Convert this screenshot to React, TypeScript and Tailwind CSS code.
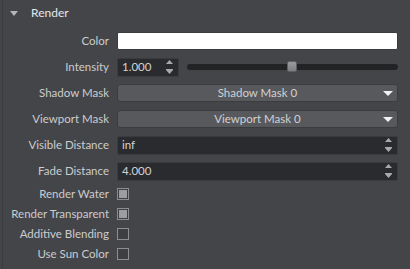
import React from "react";

const font = { fontFamily: "Lato, 'Liberation Sans', sans-serif" };

function Label({ children }: { children: React.ReactNode }) {
  return (
    <div className="w-[110px] shrink-0 pr-[1px] text-right text-[11.5px] leading-none text-[#cbccce]">
      {children}
    </div>
  );
}

function Spinner() {
  return (
    <div className="flex flex-col items-center gap-[5px]">
      <svg width="7" height="4" viewBox="0 0 7 4">
        <polygon points="0,4 7,4 3.5,0" fill="#a8a9ab" />
      </svg>
      <svg width="7" height="5" viewBox="0 0 7 5">
        <rect x="0" y="0" width="7" height="1" fill="#a8a9ab" />
        <polygon points="0,1 7,1 3.5,5" fill="#a8a9ab" />
      </svg>
    </div>
  );
}

function NumInput({ value, className }: { value: string; className: string }) {
  return (
    <div
      className={`${className} flex h-[19px] items-center justify-between rounded-[2px] border border-[#3a3b3e] bg-[#2a2b2e] pl-[4px] pr-[5px] text-[11.5px] leading-none text-[#d2d3d5]`}
    >
      <span>{value}</span>
      <Spinner />
    </div>
  );
}

function Dropdown({ value }: { value: string }) {
  return (
    <div className="relative flex h-[18px] w-[281px] items-center justify-center rounded-[3px] border border-[#3b3c3f] bg-[#58595d] text-[11.5px] leading-none text-[#d0d1d3]">
      <span>{value}</span>
      <svg className="absolute right-[4px] top-[6px]" width="10" height="5" viewBox="0 0 10 5">
        <polygon points="0,0 10,0 5,5" fill="#f2f2f2" />
      </svg>
    </div>
  );
}

function Checkbox({ checked }: { checked: boolean }) {
  return (
    <div className="flex h-[12px] w-[12px] items-center justify-center border border-[#8c8d90] bg-[#3e3f42]">
      {checked && <div className="h-[8px] w-[8px] bg-[#9c9da0]" />}
    </div>
  );
}

export default function App() {
  return (
    <div className="flex h-[269px] w-[410px] bg-[#444549]" style={font}>
      <div className="w-[2px] shrink-0" />
      <div className="flex-1 border-l border-[#3a3b3e]">
        <div className="flex h-[28px] items-center pb-[2px]">
          <svg className="ml-[7px]" width="8" height="5" viewBox="0 0 8 5">
            <polygon points="0,0 8,0 4,5" fill="#b4b5b8" />
          </svg>
          <span className="ml-[13px] text-[12px] leading-none text-[#e6e7e9]">Render</span>
        </div>

        <div className="-ml-[3px] flex flex-col">
          <div className="flex h-[26px] items-center gap-[7px]">
            <Label>Color</Label>
            <div className="h-[18px] w-[281px] rounded-[2px] border border-[#3a3b3e] bg-white" />
          </div>

          <div className="flex h-[26px] items-center gap-[7px]">
            <Label>Intensity</Label>
            <NumInput value="1.000" className="w-[62px]" />
            <div className="relative ml-[1px] flex h-[12px] w-[211px] items-center">
              <div className="h-[6px] w-full rounded-[3px] bg-[#222325]" />
              <div className="absolute left-[100px] top-0 h-[11px] w-[10px] rounded-[2px] border border-[#5e5f62] bg-gradient-to-b from-[#9a9b9e] to-[#7d7e81]" />
            </div>
          </div>

          <div className="flex h-[26px] items-center gap-[7px]">
            <Label>Shadow Mask</Label>
            <Dropdown value="Shadow Mask 0" />
          </div>

          <div className="flex h-[26px] items-center gap-[7px]">
            <Label>Viewport Mask</Label>
            <Dropdown value="Viewport Mask 0" />
          </div>

          <div className="flex h-[26px] items-center gap-[7px]">
            <Label>Visible Distance</Label>
            <NumInput value="inf" className="w-[281px]" />
          </div>

          <div className="flex h-[26px] items-center gap-[7px]">
            <Label>Fade Distance</Label>
            <NumInput value="4.000" className="w-[281px]" />
          </div>

          <div className="flex h-[20px] items-center gap-[7px]">
            <Label>Render Water</Label>
            <Checkbox checked />
          </div>
          <div className="flex h-[20px] items-center gap-[7px]">
            <Label>Render Transparent</Label>
            <Checkbox checked />
          </div>
          <div className="flex h-[20px] items-center gap-[7px]">
            <Label>Additive Blending</Label>
            <Checkbox checked={false} />
          </div>
          <div className="flex h-[20px] items-center gap-[7px]">
            <Label>Use Sun Color</Label>
            <Checkbox checked={false} />
          </div>
        </div>
      </div>
    </div>
  );
}
